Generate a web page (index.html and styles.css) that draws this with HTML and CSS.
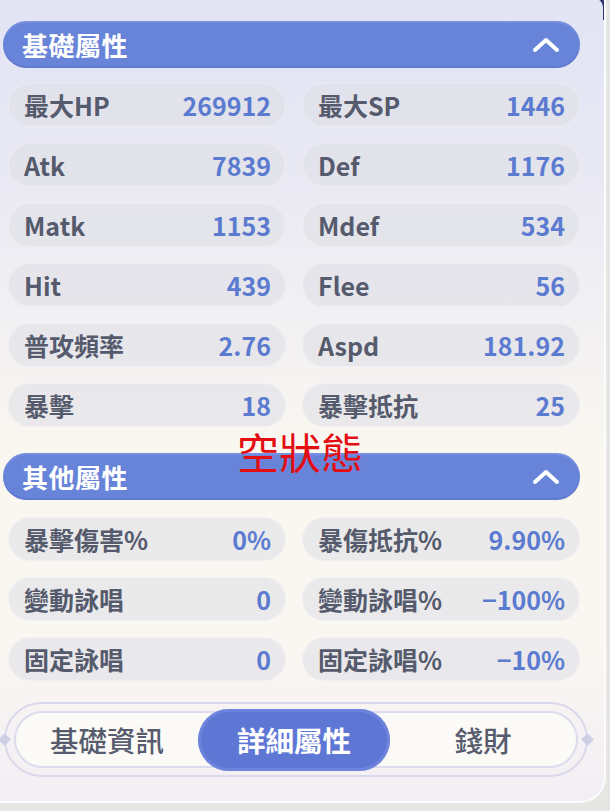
FILE: index.html
```html
<!DOCTYPE html>
<html lang="zh-Hant">
<head>
<meta charset="utf-8">
<link rel="stylesheet" href="styles.css">
</head>
<body>
<div class="panel">
  <div class="section-head">
    <span class="head-title">基礎屬性</span>
    <svg class="chev" viewBox="0 0 28 16" width="28" height="16"><path d="M3 13 L14 3 L25 13" fill="none" stroke="#fff" stroke-width="4" stroke-linecap="round" stroke-linejoin="round"/></svg>
  </div>
  <div class="grid">
    <div class="pill"><span class="lbl">最大HP</span><span class="val">269912</span></div>
    <div class="pill"><span class="lbl">最大SP</span><span class="val">1446</span></div>
    <div class="pill"><span class="lbl">Atk</span><span class="val">7839</span></div>
    <div class="pill"><span class="lbl">Def</span><span class="val">1176</span></div>
    <div class="pill"><span class="lbl">Matk</span><span class="val">1153</span></div>
    <div class="pill"><span class="lbl">Mdef</span><span class="val">534</span></div>
    <div class="pill"><span class="lbl">Hit</span><span class="val">439</span></div>
    <div class="pill"><span class="lbl">Flee</span><span class="val">56</span></div>
    <div class="pill"><span class="lbl">普攻頻率</span><span class="val">2.76</span></div>
    <div class="pill"><span class="lbl">Aspd</span><span class="val">181.92</span></div>
    <div class="pill"><span class="lbl">暴擊</span><span class="val">18</span></div>
    <div class="pill"><span class="lbl">暴擊抵抗</span><span class="val">25</span></div>
  </div>
  <div class="section-head second">
    <span class="head-title">其他屬性</span>
    <svg class="chev" viewBox="0 0 28 16" width="28" height="16"><path d="M3 13 L14 3 L25 13" fill="none" stroke="#fff" stroke-width="4" stroke-linecap="round" stroke-linejoin="round"/></svg>
  </div>
  <div class="grid grid2">
    <div class="pill"><span class="lbl">暴擊傷害%</span><span class="val">0%</span></div>
    <div class="pill"><span class="lbl">暴傷抵抗%</span><span class="val">9.90%</span></div>
    <div class="pill"><span class="lbl">變動詠唱</span><span class="val">0</span></div>
    <div class="pill"><span class="lbl">變動詠唱%</span><span class="val">−100%</span></div>
    <div class="pill"><span class="lbl">固定詠唱</span><span class="val">0</span></div>
    <div class="pill"><span class="lbl">固定詠唱%</span><span class="val">−10%</span></div>
  </div>
  <div class="tabs">
    <div class="tabs-inner">
      <div class="tab">基礎資訊</div>
      <div class="tab active">詳細屬性</div>
      <div class="tab">錢財</div>
    </div>
    <span class="deco deco-l"></span>
    <span class="deco deco-r"></span>
  </div>
  <div class="empty">空狀態</div>
  <span class="corner"></span>
</div>
</body>
</html>
```

FILE: styles.css
```css
* { box-sizing: border-box; }
html, body { margin: 0; padding: 0; }
body {
  width: 610px;
  height: 811px;
  background: #e6e6e2;
  overflow: hidden;
  font-family: "Noto Sans CJK TC", "Noto Sans", sans-serif;
}
.panel {
  position: relative;
  width: 606px;
  height: 803px;
  padding-top: 21px;
  padding-right: 26px;
  border-right: 2px solid #fbfbfd;
  border-bottom: 2px solid #fbfbfd;
  border-radius: 0 0 26px 0;
  background: linear-gradient(180deg, #e2e4f5 0%, #e9e9f4 22%, #f3f1f2 42%, #faf7f1 56%, #faf7f2 80%, #f3eef4 100%);
  overflow: hidden;
}
.corner {
  position: absolute;
  right: -2px;
  top: -6px;
  width: 16px;
  height: 26px;
  border-top: 3px solid #2b3670;
  border-right: 3px solid #2b3670;
  border-radius: 0 14px 0 0;
}
.section-head {
  margin-left: 3px;
  width: 577px;
  height: 47px;
  border-radius: 24px;
  background: #6884d9;
  box-shadow: inset 0 -2px 0 rgba(80,100,190,0.35), inset 0 2px 0 rgba(140,160,235,0.4);
  display: flex;
  align-items: center;
  justify-content: space-between;
  padding: 0 20px 0 19px;
}
.head-title {
  color: #fff;
  font-size: 26px;
  font-weight: 700;
  letter-spacing: 0.5px;
}
.chev { display: block; margin-top: 1px; }
.second { margin-top: 26px; }
.grid {
  display: grid;
  grid-template-columns: 278px 278px;
  column-gap: 16px;
  row-gap: 16px;
  margin: 15px 0 0 8px;
}
.grid2 { margin-top: 17px; }
.pill {
  height: 44px;
  border-radius: 22px;
  background: rgba(222, 222, 230, 0.58);
  box-shadow: inset 0 0 0 1px rgba(255,255,255,0.35);
  display: flex;
  align-items: center;
  justify-content: space-between;
  padding: 0 15px 0 16px;
}
.lbl {
  color: #555b6d;
  font-size: 25px;
  font-weight: 700;
}
.val {
  color: #5b7bd0;
  font-size: 25px;
  font-weight: 700;
}
.tabs {
  position: relative;
  margin: 21px 0 0 4px;
  width: 584px;
  height: 75px;
  border-radius: 38px;
  border: 2px solid #d9d9ec;
  padding: 7px 8px;
}
.tabs-inner {
  height: 57px;
  border-radius: 29px;
  border: 2px solid #dcdcee;
  display: flex;
  align-items: center;
  background: #fcfaf7;
}
.tab {
  flex: 1;
  text-align: center;
  font-size: 28.5px;
  font-weight: 500;
  color: #565c6e;
}
.tab:first-child { flex: 0 0 182px; }
.tab.active {
  flex: 0 0 192px;
  height: 62px;
  line-height: 62px;
  border-radius: 31px;
  background: #5e77d5;
  color: #fff;
  font-weight: 700;
  box-shadow: inset 0 0 0 3px rgba(120,140,225,0.6);
}
.deco {
  position: absolute;
  top: 31px;
  width: 9px;
  height: 9px;
  background: #cdcfe6;
  transform: rotate(45deg);
}
.deco-l { left: -6px; }
.deco-r { right: -6px; }
.empty {
  position: absolute;
  left: 237px;
  top: 430px;
  font-family: "Noto Sans CJK TC", sans-serif;
  font-size: 42px;
  font-weight: 400;
  color: #e30d12;
  line-height: 42px;
}
```
